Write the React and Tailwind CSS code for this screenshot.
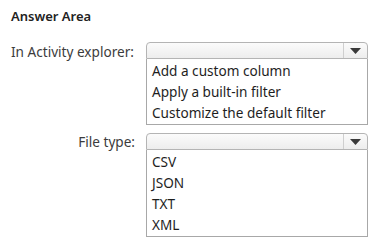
const font = { fontFamily: '"Noto Sans", "Open Sans", sans-serif' };

function Select({ options }) {
  return (
    <div className="w-[222px]">
      <div className="flex h-[17px] rounded-t-[4px] border border-[#b4b4b4] bg-gradient-to-b from-[#fbfbfb] to-[#ededed]">
        <div className="flex-1" />
        <div className="flex w-[24px] items-center justify-center border-l border-[#cfcfcf]">
          <svg width="11" height="6" viewBox="0 0 11 6">
            <path d="M0 0h11L5.5 6z" fill="#3a3a3a" />
          </svg>
        </div>
      </div>
      <div className="border border-t-0 border-[#a8a8a8] bg-white px-[5px] pt-[1px] pb-[1px]">
        {options.map((o) => (
          <div key={o} className="h-[21px] text-[13.6px] leading-[21px] text-[#1e1e1e]">
            {o}
          </div>
        ))}
      </div>
    </div>
  );
}

export default function App() {
  return (
    <div className="h-[252px] w-[387px] bg-white pl-[11px] pt-[6px]" style={font}>
      <div className="text-[13px] font-semibold leading-[20px] text-[#222]">Answer Area</div>

      <div className="mt-[16px] flex">
        <div className="w-[135px] text-[13.6px] leading-[20px] text-[#3c3c3c]">
          In Activity explorer:
        </div>
        <Select options={["Add a custom column", "Apply a built-in filter", "Customize the default filter"]} />
      </div>

      <div className="mt-[8px] flex">
        <div className="w-[125px] pr-[1px] text-right text-[13.6px] leading-[20px] text-[#3c3c3c] -mt-[1px]">
          File type:
        </div>
        <div className="ml-[10px]">
          <Select options={["CSV", "JSON", "TXT", "XML"]} />
        </div>
      </div>
    </div>
  );
}
